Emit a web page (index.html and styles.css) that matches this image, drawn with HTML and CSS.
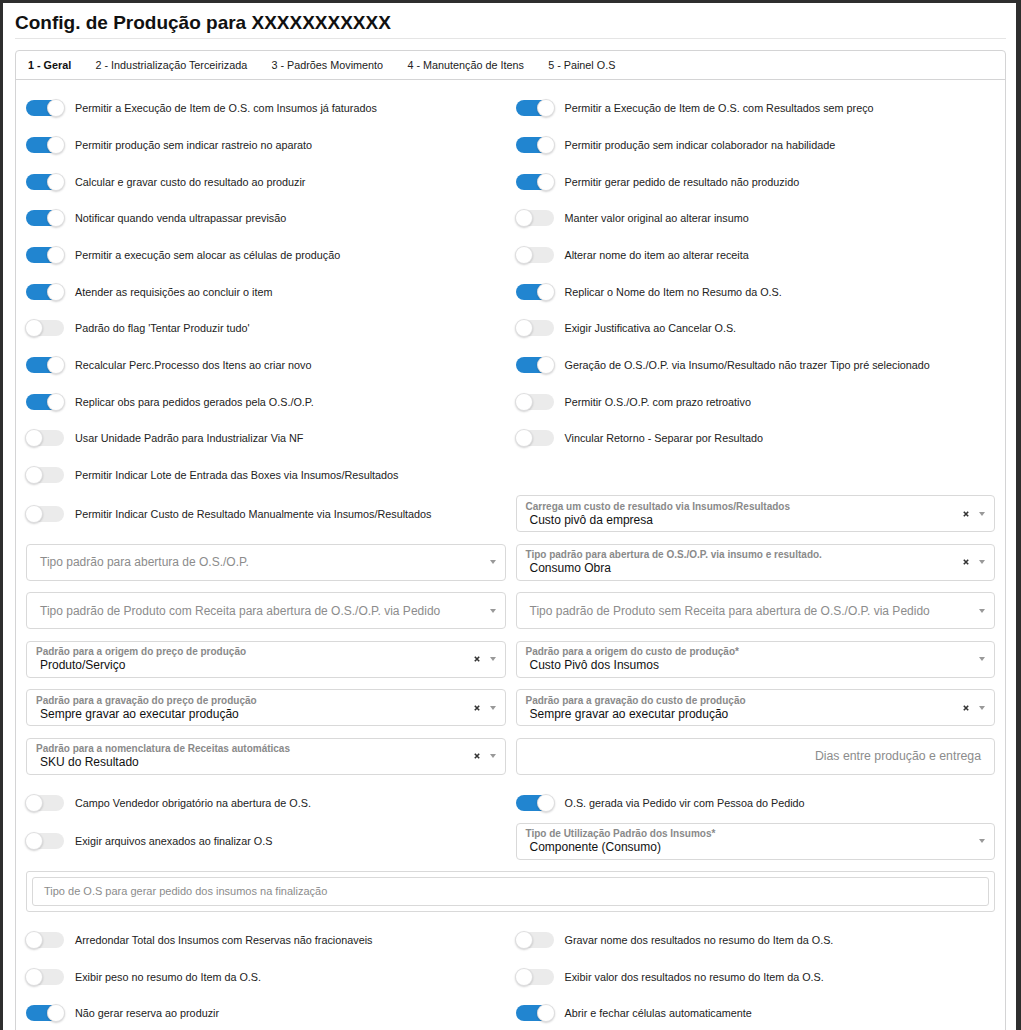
FILE: index.html
```html
<!DOCTYPE html>
<html lang="pt-BR">
<head>
  <meta charset="UTF-8">
  <title>Config. de Produção</title>
  <link rel="stylesheet" href="styles.css">
</head>
<body>
  <div class="dialog">
    <h1 class="title">Config. de Produção para XXXXXXXXXXX</h1>

    <div class="tabs">
      <div class="tab-bar">
        <span class="tab active">1 - Geral</span>
        <span class="tab">2 - Industrialização Terceirizada</span>
        <span class="tab">3 - Padrões Movimento</span>
        <span class="tab">4 - Manutenção de Itens</span>
        <span class="tab">5 - Painel O.S</span>
      </div>

      <div class="panel">
        <!-- Flags principais -->
        <div class="grid rows-a">
          <label class="toggle on"><span class="track"></span>Permitir a Execução de Item de O.S. com Insumos já faturados</label>
          <label class="toggle on"><span class="track"></span>Permitir a Execução de Item de O.S. com Resultados sem preço</label>
          <label class="toggle on"><span class="track"></span>Permitir produção sem indicar rastreio no aparato</label>
          <label class="toggle on"><span class="track"></span>Permitir produção sem indicar colaborador na habilidade</label>
          <label class="toggle on"><span class="track"></span>Calcular e gravar custo do resultado ao produzir</label>
          <label class="toggle on"><span class="track"></span>Permitir gerar pedido de resultado não produzido</label>
          <label class="toggle on"><span class="track"></span>Notificar quando venda ultrapassar previsão</label>
          <label class="toggle"><span class="track"></span>Manter valor original ao alterar insumo</label>
          <label class="toggle on"><span class="track"></span>Permitir a execução sem alocar as células de produção</label>
          <label class="toggle"><span class="track"></span>Alterar nome do item ao alterar receita</label>
          <label class="toggle on"><span class="track"></span>Atender as requisições ao concluir o item</label>
          <label class="toggle on"><span class="track"></span>Replicar o Nome do Item no Resumo da O.S.</label>
          <label class="toggle"><span class="track"></span>Padrão do flag 'Tentar Produzir tudo'</label>
          <label class="toggle"><span class="track"></span>Exigir Justificativa ao Cancelar O.S.</label>
          <label class="toggle on"><span class="track"></span>Recalcular Perc.Processo dos Itens ao criar novo</label>
          <label class="toggle on"><span class="track"></span>Geração de O.S./O.P. via Insumo/Resultado não trazer Tipo pré selecionado</label>
          <label class="toggle on"><span class="track"></span>Replicar obs para pedidos gerados pela O.S./O.P.</label>
          <label class="toggle"><span class="track"></span>Permitir O.S./O.P. com prazo retroativo</label>
          <label class="toggle"><span class="track"></span>Usar Unidade Padrão para Industrializar Via NF</label>
          <label class="toggle"><span class="track"></span>Vincular Retorno - Separar por Resultado</label>
          <label class="toggle"><span class="track"></span>Permitir Indicar Lote de Entrada das Boxes via Insumos/Resultados</label>
          <div></div>
        </div>

        <!-- Padrões -->
        <div class="grid rows-b">
          <label class="toggle"><span class="track"></span>Permitir Indicar Custo de Resultado Manualmente via Insumos/Resultados</label>
          <div class="select">
            <div class="select-body">
              <span class="select-label">Carrega um custo de resultado via Insumos/Resultados</span>
              <span class="select-value">Custo pivô da empresa</span>
            </div>
            <svg class="clear" viewBox="0 0 6 6"><path d="M0.8 0.8 L5.2 5.2 M5.2 0.8 L0.8 5.2"/></svg>
            <svg class="arrow" viewBox="0 0 6 4"><path d="M0 0 H6 L3 4 Z"/></svg>
          </div>

          <div class="select">
            <div class="select-body"><span class="select-placeholder">Tipo padrão para abertura de O.S./O.P.</span></div>
            <svg class="arrow" viewBox="0 0 6 4"><path d="M0 0 H6 L3 4 Z"/></svg>
          </div>
          <div class="select">
            <div class="select-body">
              <span class="select-label">Tipo padrão para abertura de O.S./O.P. via insumo e resultado.</span>
              <span class="select-value">Consumo Obra</span>
            </div>
            <svg class="clear" viewBox="0 0 6 6"><path d="M0.8 0.8 L5.2 5.2 M5.2 0.8 L0.8 5.2"/></svg>
            <svg class="arrow" viewBox="0 0 6 4"><path d="M0 0 H6 L3 4 Z"/></svg>
          </div>

          <div class="select">
            <div class="select-body"><span class="select-placeholder">Tipo padrão de Produto com Receita para abertura de O.S./O.P. via Pedido</span></div>
            <svg class="arrow" viewBox="0 0 6 4"><path d="M0 0 H6 L3 4 Z"/></svg>
          </div>
          <div class="select">
            <div class="select-body"><span class="select-placeholder">Tipo padrão de Produto sem Receita para abertura de O.S./O.P. via Pedido</span></div>
            <svg class="arrow" viewBox="0 0 6 4"><path d="M0 0 H6 L3 4 Z"/></svg>
          </div>

          <div class="select">
            <div class="select-body">
              <span class="select-label">Padrão para a origem do preço de produção</span>
              <span class="select-value">Produto/Serviço</span>
            </div>
            <svg class="clear" viewBox="0 0 6 6"><path d="M0.8 0.8 L5.2 5.2 M5.2 0.8 L0.8 5.2"/></svg>
            <svg class="arrow" viewBox="0 0 6 4"><path d="M0 0 H6 L3 4 Z"/></svg>
          </div>
          <div class="select">
            <div class="select-body">
              <span class="select-label">Padrão para a origem do custo de produção*</span>
              <span class="select-value">Custo Pivô dos Insumos</span>
            </div>
            <svg class="arrow" viewBox="0 0 6 4"><path d="M0 0 H6 L3 4 Z"/></svg>
          </div>

          <div class="select">
            <div class="select-body">
              <span class="select-label">Padrão para a gravação do preço de produção</span>
              <span class="select-value">Sempre gravar ao executar produção</span>
            </div>
            <svg class="clear" viewBox="0 0 6 6"><path d="M0.8 0.8 L5.2 5.2 M5.2 0.8 L0.8 5.2"/></svg>
            <svg class="arrow" viewBox="0 0 6 4"><path d="M0 0 H6 L3 4 Z"/></svg>
          </div>
          <div class="select">
            <div class="select-body">
              <span class="select-label">Padrão para a gravação do custo de produção</span>
              <span class="select-value">Sempre gravar ao executar produção</span>
            </div>
            <svg class="clear" viewBox="0 0 6 6"><path d="M0.8 0.8 L5.2 5.2 M5.2 0.8 L0.8 5.2"/></svg>
            <svg class="arrow" viewBox="0 0 6 4"><path d="M0 0 H6 L3 4 Z"/></svg>
          </div>

          <div class="select">
            <div class="select-body">
              <span class="select-label">Padrão para a nomenclatura de Receitas automáticas</span>
              <span class="select-value">SKU do Resultado</span>
            </div>
            <svg class="clear" viewBox="0 0 6 6"><path d="M0.8 0.8 L5.2 5.2 M5.2 0.8 L0.8 5.2"/></svg>
            <svg class="arrow" viewBox="0 0 6 4"><path d="M0 0 H6 L3 4 Z"/></svg>
          </div>
          <div class="input-number">Dias entre produção e entrega</div>
        </div>

        <div class="grid rows-c">
          <label class="toggle"><span class="track"></span>Campo Vendedor obrigatório na abertura de O.S.</label>
          <label class="toggle on"><span class="track"></span>O.S. gerada via Pedido vir com Pessoa do Pedido</label>
          <label class="toggle"><span class="track"></span>Exigir arquivos anexados ao finalizar O.S</label>
          <div class="select">
            <div class="select-body">
              <span class="select-label">Tipo de Utilização Padrão dos Insumos*</span>
              <span class="select-value">Componente (Consumo)</span>
            </div>
            <svg class="arrow" viewBox="0 0 6 4"><path d="M0 0 H6 L3 4 Z"/></svg>
          </div>
        </div>

        <div class="field-box">
          <div class="text-input">Tipo de O.S para gerar pedido dos insumos na finalização</div>
        </div>

        <div class="grid rows-d">
          <label class="toggle"><span class="track"></span>Arredondar Total dos Insumos com Reservas não fracionaveis</label>
          <label class="toggle"><span class="track"></span>Gravar nome dos resultados no resumo do Item da O.S.</label>
          <label class="toggle"><span class="track"></span>Exibir peso no resumo do Item da O.S.</label>
          <label class="toggle"><span class="track"></span>Exibir valor dos resultados no resumo do Item da O.S.</label>
          <label class="toggle on"><span class="track"></span>Não gerar reserva ao produzir</label>
          <label class="toggle on"><span class="track"></span>Abrir e fechar células automaticamente</label>
        </div>
      </div>
    </div>
  </div>
</body>
</html>
```

FILE: styles.css
```css
body {
  margin: 0;
  background: #2e2e2e;
  font-family: 'Liberation Sans', Arial, sans-serif;
  color: #222;
}

.dialog {
  margin: 3px 5px 0 3px;
  background: #fff;
  padding: 8px 10px 40px 12px;
}

.title {
  margin: 0;
  font-size: 19px;
  line-height: 24px;
  font-weight: 700;
  color: #111;
  padding-bottom: 3px;
  border-bottom: 1px solid #e5e5e5;
}

.tabs {
  margin-top: 11px;
  border: 1px solid #d4d4d5;
  border-radius: 4px;
}

.tab-bar {
  display: flex;
  height: 28px;
  line-height: 28px;
  padding-left: 12px;
  border-bottom: 1px solid #d4d4d5;
  font-size: 10.8px;
  color: #222;
}

.tab {
  margin-right: 24.3px;
}

.tab.active {
  font-weight: 700;
  color: #111;
}

.panel {
  padding: 10px 10px 20px 10px;
}

.grid {
  display: grid;
  grid-template-columns: 1fr 1fr;
  column-gap: 10px;
}

.rows-a {
  grid-auto-rows: 36.67px;
}

.rows-b {
  margin-top: 2px;
  grid-auto-rows: 37px;
  row-gap: 11.5px;
}

.rows-c {
  margin-top: 10px;
  grid-template-rows: 36.67px 37px;
  row-gap: 1.3px;
}

.rows-d {
  margin-top: 10.5px;
  grid-auto-rows: 36.5px;
}

/* toggles */
.toggle {
  display: flex;
  align-items: center;
  font-size: 10.8px;
  color: #222;
  white-space: nowrap;
}

.track {
  position: relative;
  flex: none;
  width: 38px;
  height: 16px;
  margin-right: 11px;
  border-radius: 8px;
  background: #ebebeb;
}

.track::after {
  content: '';
  position: absolute;
  top: -1px;
  left: -1px;
  width: 18px;
  height: 18px;
  border-radius: 50%;
  background: #fff;
  box-shadow: 0 1px 2px rgba(34, 36, 38, 0.2), inset 0 0 0 1px rgba(34, 36, 38, 0.15);
}

.toggle.on .track {
  background: #2185d0;
}

.toggle.on .track::after {
  left: 21px;
}

/* selects */
.select {
  display: flex;
  align-items: center;
  border: 1px solid #d9d9d9;
  border-radius: 4px;
  padding: 0 9px 0 0;
  box-sizing: border-box;
  height: 37px;
}

.select-body {
  flex: 1;
  display: flex;
  flex-direction: column;
  justify-content: center;
  min-width: 0;
  white-space: nowrap;
}

.select-label {
  padding-left: 9px;
  font-size: 10px;
  line-height: 12px;
  font-weight: 700;
  color: #8a8a8a;
}

.select-value {
  padding-left: 13px;
  font-size: 12px;
  line-height: 14px;
  color: #111;
}

.select-placeholder {
  padding-left: 13px;
  font-size: 12px;
  color: #8c8c8c;
}

.clear {
  width: 6px;
  height: 6px;
  margin-right: 10px;
  stroke: #333;
  stroke-width: 1.6;
}

.arrow {
  width: 6px;
  height: 4px;
  fill: #999;
}

.input-number {
  display: flex;
  align-items: center;
  justify-content: flex-end;
  height: 37px;
  box-sizing: border-box;
  padding-right: 13px;
  border: 1px solid #d9d9d9;
  border-radius: 4px;
  font-size: 12.3px;
  color: #8c8c8c;
}

.field-box {
  margin-top: 11px;
  border: 1px solid #d9d9d9;
  border-radius: 3px;
  padding: 5px;
}

.text-input {
  height: 29px;
  box-sizing: border-box;
  display: flex;
  align-items: center;
  padding-left: 11px;
  border: 1px solid #d9d9d9;
  border-radius: 3px;
  font-size: 11px;
  color: #8c8c8c;
}
```
